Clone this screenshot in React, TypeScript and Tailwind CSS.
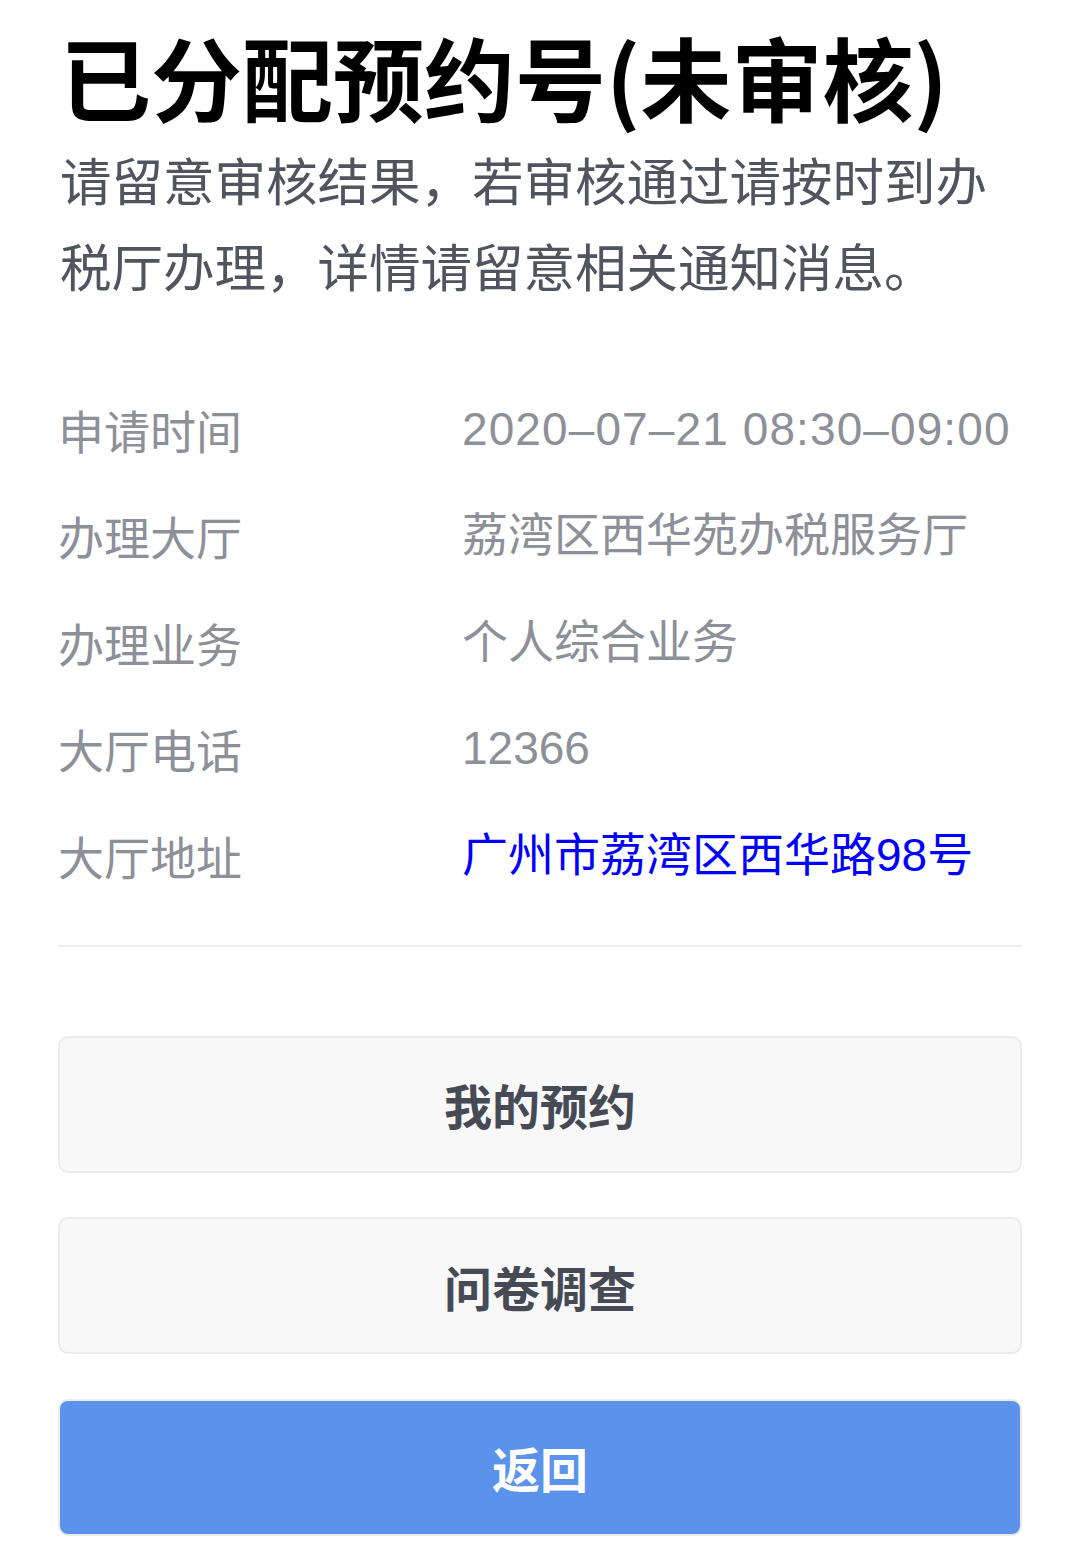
import React from "react";

const rows: { label: string; value: string; link?: boolean; date?: boolean }[] = [
  { label: "申请时间", value: "2020–07–21 08:30–09:00", date: true },
  { label: "办理大厅", value: "荔湾区西华苑办税服务厅" },
  { label: "办理业务", value: "个人综合业务" },
  { label: "大厅电话", value: "12366" },
  { label: "大厅地址", value: "广州市荔湾区西华路98号", link: true },
];

export default function App() {
  return (
    <div
      className="w-[1080px] min-h-[1560px] bg-white px-[58px]"
      style={{ fontFamily: '"Noto Sans CJK SC", "Noto Sans", sans-serif' }}
    >
      <h1 className="pt-[20px] pl-[2px] text-[91px] font-bold leading-[110px] text-black">
        已分配预约号(未审核)
      </h1>
      <p className="mt-[6px] text-[51.5px] leading-[86px] text-[#50545e] pl-[2px]">
        请留意审核结果，若审核通过请按时到办税厅办理，详情请留意相关通知消息。
      </p>
      <div className="mt-[68px] flex flex-col">
        {rows.map((r) => (
          <div key={r.label} className="flex h-[106.5px] items-center text-[46px]">
            <div className="w-[404px] shrink-0 text-[#8d9098]">{r.label}</div>
            <div
              className={`${r.link ? "text-[#0000ff]" : "text-[#8d9098]"} ${r.date ? "tracking-[1.1px]" : ""} whitespace-nowrap`}
              style={{ fontFamily: '"Liberation Sans", "Noto Sans CJK SC", sans-serif' }}
            >
              {r.value}
            </div>
          </div>
        ))}
      </div>
      <div className="mt-[36px] h-[2px] bg-[#f0f0f0]" />
      <div className="mt-[89px] flex flex-col gap-[44.5px]">
        <button className="h-[137px] w-full rounded-[10px] border-2 border-[#ececec] bg-[#f8f8f8] text-[48px] font-bold text-[#464a55]">
          我的预约
        </button>
        <button className="h-[137px] w-full rounded-[10px] border-2 border-[#ececec] bg-[#f8f8f8] text-[48px] font-bold text-[#464a55]">
          问卷调查
        </button>
        <button className="h-[137px] w-full rounded-[10px] border-2 border-[#ececec] bg-[#5a92ec] text-[48px] font-bold text-white">
          返回
        </button>
      </div>
    </div>
  );
}
